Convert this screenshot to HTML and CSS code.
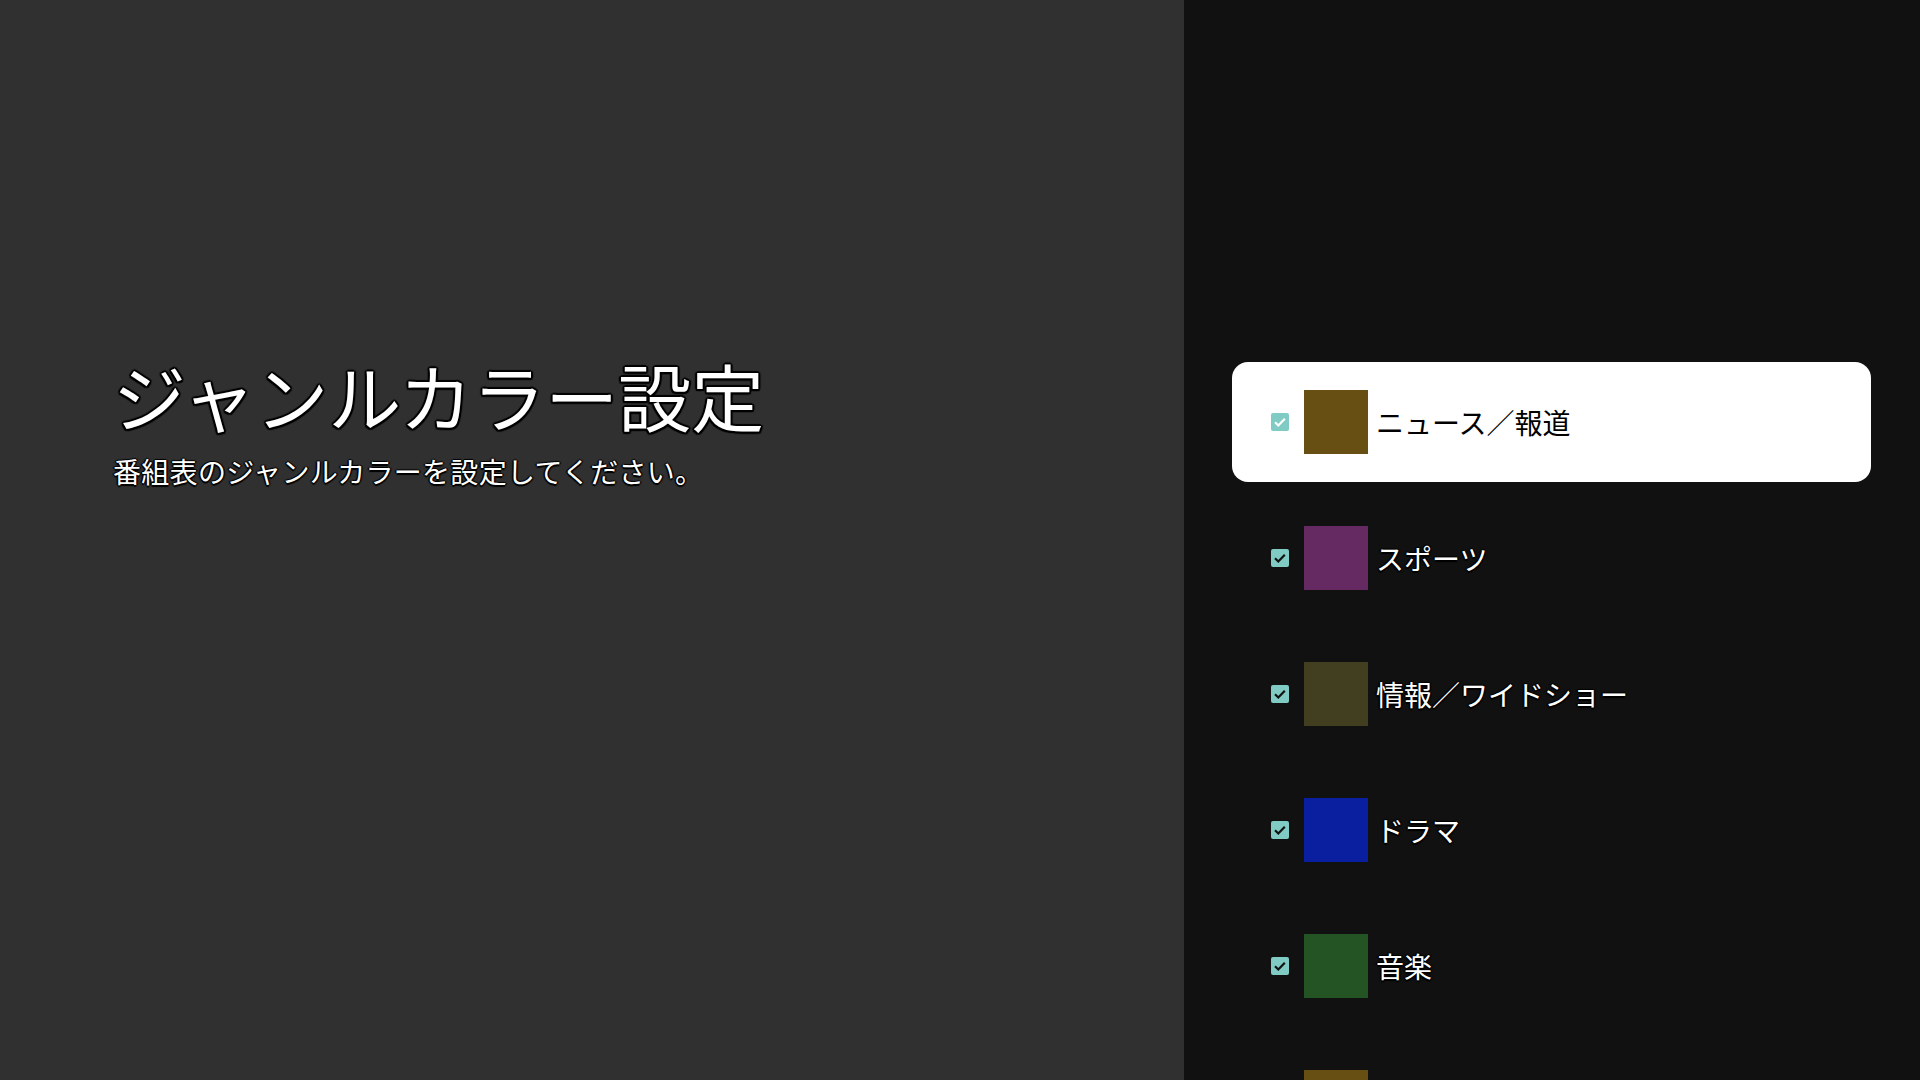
FILE: index.html
```html
<!DOCTYPE html>
<html lang="ja">
<head>
  <meta charset="UTF-8" />
  <meta name="viewport" content="width=device-width, initial-scale=1.0" />
  <title>ジャンルカラー設定</title>
  <link rel="stylesheet" href="styles.css">
</head>
<body>
  <div class="screen">
    <div class="intro">
      <h1 class="title">ジャンルカラー設定</h1>
      <p class="subtitle">番組表のジャンルカラーを設定してください。</p>
    </div>

    <div class="genres">
      <div class="genre selected">
        <span class="check"><svg viewBox="0 0 18 18"><path d="M4 9.3l3.3 3.2 6.5-6.7" /></svg></span>
        <span class="swatch" style="background:#674f13"></span>
        <span class="label">ニュース／報道</span>
      </div>
      <div class="genre">
        <span class="check"><svg viewBox="0 0 18 18"><path d="M4 9.3l3.3 3.2 6.5-6.7" /></svg></span>
        <span class="swatch" style="background:#652a62"></span>
        <span class="label">スポーツ</span>
      </div>
      <div class="genre">
        <span class="check"><svg viewBox="0 0 18 18"><path d="M4 9.3l3.3 3.2 6.5-6.7" /></svg></span>
        <span class="swatch" style="background:#423f20"></span>
        <span class="label">情報／ワイドショー</span>
      </div>
      <div class="genre">
        <span class="check"><svg viewBox="0 0 18 18"><path d="M4 9.3l3.3 3.2 6.5-6.7" /></svg></span>
        <span class="swatch" style="background:#0a1fa0"></span>
        <span class="label">ドラマ</span>
      </div>
      <div class="genre">
        <span class="check"><svg viewBox="0 0 18 18"><path d="M4 9.3l3.3 3.2 6.5-6.7" /></svg></span>
        <span class="swatch" style="background:#245424"></span>
        <span class="label">音楽</span>
      </div>
      <div class="genre">
        <span class="check"><svg viewBox="0 0 18 18"><path d="M4 9.3l3.3 3.2 6.5-6.7" /></svg></span>
        <span class="swatch" style="background:#674f13"></span>
      </div>
    </div>
  </div>
</body>
</html>
```

FILE: styles.css
```css
html, body {
  margin: 0;
  height: 100%;
}
body {
  background: #111;
  font-family: "Noto Sans CJK JP", "Noto Sans", sans-serif;
  overflow: hidden;
}
.screen {
  display: flex;
  height: 100vh;
}

/* left side: heading */
.intro {
  width: 1184px;
  flex-shrink: 0;
  background: #303030;
  box-sizing: border-box;
  padding: 342px 0 0 113px;
}
.title {
  margin: 0;
  font-size: 73px;
  font-weight: 400;
  line-height: 104px;
  color: #fff;
  text-shadow: 2px 0 1px #000, -2px 0 1px #000, 0 2px 1px #000, 0 -2px 1px #000,
    1.5px 1.5px 1px #000, -1.5px 1.5px 1px #000, 1.5px -1.5px 1px #000, -1.5px -1.5px 1px #000;
}
.subtitle {
  margin: 5px 0 0;
  font-size: 28px;
  letter-spacing: 0.3px;
  line-height: 40px;
  color: #fff;
  text-shadow: 1.5px 0 1px #000, -1.5px 0 1px #000, 0 1.5px 1px #000, 0 -1.5px 1px #000;
}

/* right side: genre list */
.genres {
  flex: 1;
  display: flex;
  flex-direction: column;
  gap: 16px;
  padding: 362px 49px 0 48px;
}
.genre {
  display: flex;
  align-items: center;
  height: 120px;
  flex-shrink: 0;
  padding-left: 39px;
  border-radius: 16px;
}
.check {
  width: 18px;
  height: 18px;
  border-radius: 2px;
  background: #80cbc4;
  margin-right: 15px;
  display: flex;
}
.check svg {
  width: 18px;
  height: 18px;
  fill: none;
  stroke: #111;
  stroke-width: 2.2;
}
.swatch {
  width: 64px;
  height: 64px;
  margin-right: 8px;
}
.label {
  font-size: 28px;
  color: #fff;
  text-shadow: 1.5px 0 1px #000, -1.5px 0 1px #000, 0 1.5px 1px #000, 0 -1.5px 1px #000;
}
.genre.selected {
  background: #fff;
}
.genre.selected .check svg {
  stroke: #fff;
}
.genre.selected .label {
  color: #000;
  text-shadow: none;
}
```
